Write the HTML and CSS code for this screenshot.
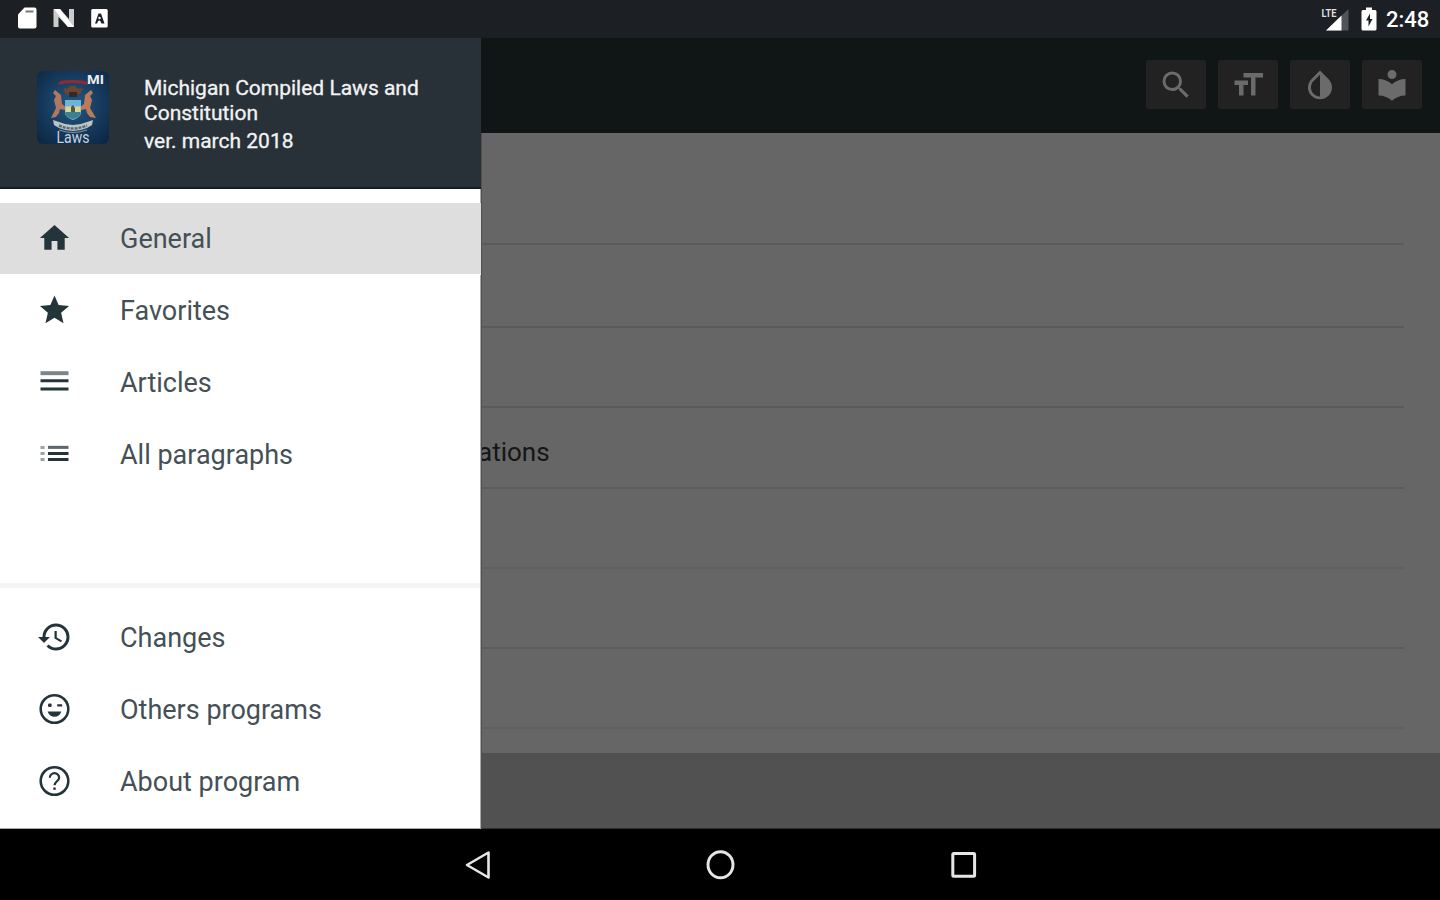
FILE: index.html
```html
<!DOCTYPE html>
<html lang="en">
<head>
<meta charset="utf-8">
<title>Michigan Compiled Laws and Constitution</title>
<link rel="stylesheet" href="styles.css">
</head>
<body>
<div class="screen">
  <header class="status">
    <div class="status-left">
      <svg width="22" height="24" viewBox="0 0 22 24"><path d="M8.500 1.500H18.500Q20.500 1.500 20.500 3.500V20.500Q20.500 22.500 18.500 22.500H4Q2 22.500 2 20.500V8.500Z" fill="#fff"/><path d="M9.500 5.500h8" stroke="#777" stroke-width="2"/></svg>
      <svg width="24" height="24" viewBox="0 0 24 24"><path d="M1.500 3H8L17 13V3h5v18h-6L6.500 11v10h-5z" fill="#ccc"/><path d="M2 3h6l14 18h-6z" fill="#fff"/></svg>
      <svg width="20" height="24" viewBox="0 0 20 24"><rect x="1.200" y="3" width="16.500" height="18.500" rx="1.500" fill="#fff"/><path d="M5 17.500 8.500 7.500h2.500l3.500 10h-3l-1.500-3-2 .5-.8 2.500z" fill="#1c2025"/><circle cx="9.500" cy="12" r="1.200" fill="#fff"/></svg>
    </div>
    <div class="status-right">
      <svg width="30" height="26" viewBox="0 0 30 26"><path d="M28.500 3v21.500H6z" fill="#51555a"/><path d="M21.500 9.500v15H6z" fill="#fff"/><text x="1.500" y="11" class="lte" textLength="15" lengthAdjust="spacingAndGlyphs">LTE</text></svg>
      <svg class="battery" width="16" height="24" viewBox="0 0 16 24"><path d="M5 .5h6v2.500h3q1.500 0 1.500 1.500V22q0 1.500-1.500 1.500H2Q.5 23.500.5 22V4.500Q.5 3 2 3h3z" fill="#fff"/><path d="M9 6.500 5 13.500h2.500v6L11.500 12H9z" fill="#1c2025"/></svg>
      <span class="clock">2:48</span>
    </div>
  </header>

  <main class="body">
    <aside class="drawer">
      <div class="drawer-head">
        <svg class="logo" width="72" height="73" viewBox="0 0 72 73">
          <defs><radialGradient id="sea" cx=".5" cy=".45" r=".75"><stop offset="0" stop-color="#245a82"/><stop offset=".5" stop-color="#173c5f"/><stop offset="1" stop-color="#0b2340"/></radialGradient></defs>
          <rect width="72" height="73" rx="6" fill="url(#sea)"/>
          <path d="M21 14Q35 10 51 14l-2-4Q35 8 23 10z" fill="#8c2b33"/>
          <path d="M27 17q5 2 6-2h5q2 4 8 2l-3 6q-3-1-4 3h-7q0-4-4-3z" fill="#70452f"/>
          <path d="M32 21h8v5h-8z" fill="#33282d"/>
          <path d="M18 19l6 5 1 9 4 3-1 3-5-1-1 4-3 4-5 1 5-10-2-8 2-4-3-3z" fill="#b27760"/>
          <path d="M54 19l-6 5-1 9-4 3 1 3 5-1 1 4 3 4 6 1-6-10 2-8-2-4 3-3z" fill="#bd7a5a"/>
          <path d="M28 29h16v14q-2 4-8 6-6-2-8-6z" fill="#6fb2da"/>
          <path d="M28.500 35.500h15v6h-15z" fill="#d5d995"/><path d="M28.500 41h15v3q-3 3-7.500 4-5-1-7.500-4z" fill="#3c7f91"/><path d="M34 36l2-2 2 3v4h-4z" fill="#4d5940"/>
          <path d="M16 49l6 2q14 6 28 0l6-2-1 5-5 3q-14 6-28 0l-5-3z" fill="#bac3c6"/>
          <path d="M22 54.500q14 6 28 0" fill="none" stroke="#5c6b75" stroke-width="2.500" stroke-dasharray="3 1"/>
          <path d="M22 59q14 5 28 0" fill="none" stroke="#8496a3" stroke-width="1"/>
          <text x="50" y="13" class="logo-state" textLength="17" lengthAdjust="spacingAndGlyphs">MI</text>
          <text x="19.500" y="72" class="logo-word" textLength="33" lengthAdjust="spacingAndGlyphs">Laws</text>
        </svg>
        <div class="titles">
          <div class="app-title">Michigan Compiled Laws and<br>Constitution</div>
          <div class="app-version">ver. march 2018</div>
        </div>
      </div>
      <nav class="menu">
        <a class="item active"><svg class="icon" viewBox="0 0 24 24"><path d="M10 20v-6h4v6h5v-8h3L12 3 2 12h3v8z"/></svg><span>General</span></a>
        <a class="item"><svg class="icon" viewBox="0 0 24 24"><path d="M12 17.270 18.180 21l-1.640-7.030L22 9.240l-7.190-.61L12 2 9.190 8.630 2 9.240l5.460 4.730L5.820 21z"/></svg><span>Favorites</span></a>
        <a class="item"><svg class="icon" viewBox="0 0 24 24"><path opacity=".6" d="M2.400 4.600h19.200v2.700H2.400z"/><path d="M2.400 10.100h19.200v2H2.400zM2.400 15.700h19.200v2.200H2.400z"/></svg><span>Articles</span></a>
        <a class="item"><svg class="icon" viewBox="0 0 24 24"><path opacity=".75" d="M7.500 6.400h14.100v2.100H7.500z"/><path d="M7.500 10.600h14.100v2H7.500zM7.500 14.800h14.100v2H7.500z"/><path opacity=".45" d="M2.400 6.500h2.800v2H2.400zM2.400 10.600h2.800v2H2.400zM2.400 14.800h2.800v2H2.400z"/></svg><span>All paragraphs</span></a>
      </nav>
      <nav class="menu menu-bottom">
        <a class="item"><svg class="icon large" viewBox="0 0 24 24"><path d="M13 3a9 9 0 0 0-9 9H1l3.890 3.890.07.14L9 12H6c0-3.870 3.130-7 7-7s7 3.130 7 7-3.130 7-7 7c-1.930 0-3.680-.79-4.940-2.060l-1.420 1.420A8.954 8.954 0 0 0 13 21a9 9 0 0 0 0-18zm-1 5v5l4.280 2.540.72-1.210-3.500-2.080V8H12z"/></svg><span>Changes</span></a>
        <a class="item"><svg class="icon large" viewBox="0 0 24 24"><circle cx="12" cy="12" r="9.200" fill="none" stroke="#24343b" stroke-width="1.700"/><rect x="7.700" y="8.400" width="2.400" height="2.300" rx=".8"/><path d="M13.800 8.800h3.300v1.500h-3.300zM7.400 13.700h9.200q-1.300 3.500-4.600 3.500t-4.600-3.500z"/></svg><span>Others programs</span></a>
        <a class="item"><svg class="icon large" viewBox="0 0 24 24"><circle cx="12" cy="12" r="9.200" fill="none" stroke="#24343b" stroke-width="1.700"/><path d="M8.900 9.900a3.100 3.100 0 0 1 6.200 0c0 2.100-3.100 2.500-3.100 5" fill="none" stroke="#24343b" stroke-width="1.500"/><path d="M11.200 16.300h1.600v1.600h-1.600z"/></svg><span>About program</span></a>
      </nav>
    </aside>

    <section class="content">
      <div class="toolbar">
        <button class="tool" aria-label="Search"><svg viewBox="0 0 24 24"><path d="M15.500 14h-.79l-.28-.27A6.471 6.471 0 0 0 16 9.500 6.500 6.500 0 1 0 9.500 16c1.610 0 3.090-.59 4.230-1.570l.27.28v.79l5 4.990L20.490 19l-4.990-5zm-6 0C7.010 14 5 11.990 5 9.500S7.010 5 9.500 5 14 7.010 14 9.500 11.990 14 9.500 14z"/></svg></button>
        <button class="tool" aria-label="Text size"><svg viewBox="0 0 24 24"><path d="M9 4v3h5v12h3V7h5V4zM3 12h3v7h3v-7h3V9H3z"/></svg></button>
        <button class="tool" aria-label="Invert colors"><svg viewBox="0 0 24 24"><path d="M17.660 7.930 12 2.270 6.340 7.930c-3.120 3.120-3.120 8.190 0 11.310C7.900 20.800 9.950 21.580 12 21.580s4.100-.78 5.660-2.340c3.120-3.120 3.120-8.190 0-11.310zM12 19.590c-1.600 0-3.110-.62-4.240-1.760C6.620 16.690 6 15.190 6 13.590s.62-3.110 1.760-4.240L12 5.100v14.490z"/></svg></button>
        <button class="tool" aria-label="Library"><svg viewBox="0 0 24 24"><path d="M12 11.550C9.640 9.350 6.480 8 3 8v11c3.480 0 6.640 1.350 9 3.550 2.360-2.190 5.520-3.550 9-3.550V8c-3.480 0-6.640 1.350-9 3.550zM12 8c1.660 0 3-1.340 3-3s-1.340-3-3-3-3 1.340-3 3 1.340 3 3 3z"/></svg></button>
      </div>
      <div class="list">
        <div class="row"></div>
        <div class="row"></div>
        <div class="row"></div>
        <div class="row"><span>ations</span></div>
        <div class="row faint"></div>
        <div class="row"></div>
        <div class="row faint"></div>
      </div>
      <div class="footer"></div>
    </section>
  </main>

  <footer class="navbar">
    <svg width="28" height="32" viewBox="0 0 28 32"><path d="M3 16 24.500 3.500v25z" fill="none" stroke="#e6e6e6" stroke-width="2.600" stroke-linejoin="round"/></svg>
    <svg width="32" height="32" viewBox="0 0 32 32"><ellipse cx="15.500" cy="15.700" rx="12.500" ry="13" fill="none" stroke="#e6e6e6" stroke-width="2.900"/></svg>
    <svg width="28" height="32" viewBox="0 0 28 32"><rect x="2.800" y="4.600" width="21.800" height="22.600" rx="1" fill="none" stroke="#e6e6e6" stroke-width="3"/></svg>
  </footer>
</div>
</body>
</html>
```
FILE: styles.css
```css
* { box-sizing: border-box; }
body { margin: 0; font-family: Roboto, "Liberation Sans", sans-serif; }
.screen { width: 1440px; height: 900px; overflow: hidden; display: flex; flex-direction: column; background: #000; }
svg { display: block; flex: none; }

.status { height: 38px; flex: none; background: #1c2025; display: flex; justify-content: space-between; padding: 6px 12px 0 16px; }
.status-left { display: flex; gap: 14px; }
.status-right { display: flex; }
.lte { font: 700 11px Roboto, sans-serif; fill: #ddd; }
.battery { margin: 1px 9px 0 11px; }
.clock { width: 42px; font-size: 22px; line-height: 27px; font-weight: 500; color: #fff; white-space: nowrap; }

.body { height: 791px; flex: none; display: flex; }

.drawer { width: 481px; flex: none; background: #fff; display: flex; flex-direction: column; border-right: 1px solid #aaa; border-bottom: 1px solid #aaa; }
.drawer-head { height: 151px; flex: none; margin-right: -1px; background: #293138; border-bottom: 2px solid #151b2a; display: flex; padding: 33px 0 0 37px; gap: 35px; }
.titles { color: #f1f3f4; font-size: 21px; padding-top: 5px; white-space: nowrap; -webkit-text-stroke: .3px #f1f3f4; }
.app-title { line-height: 25px; }
.app-version { line-height: 25px; margin-top: 3px; }
.logo-state { font: 700 12px Roboto, sans-serif; fill: #e8edf0; }
.logo-word { font: 400 16px Roboto, sans-serif; fill: #c6d2dc; }

.menu { padding-top: 14px; display: flex; flex-direction: column; margin-right: -1px; }
.item { height: 72px; display: flex; align-items: center; padding: 0 0 2px 36px; gap: 48px; font-size: 27px; color: #455056; white-space: nowrap; }
.item span { padding-top: 2px; }
.item.active { background: linear-gradient(#dedede 71px, #fff 71px); }
.icon { width: 37px; height: 36px; margin-right: -1px; padding: .5px; fill: #24343b; }
.icon.large { padding: 0; }
.menu-bottom { margin-top: auto; margin-right: 0; border-top: 5px solid #f4f4f4; padding-top: 14px; padding-bottom: 10px; }

.content { flex: 1; display: flex; flex-direction: column; background: #666; border-left: 1px solid #505050; border-bottom: 1px solid #303030; }
.toolbar { height: 95px; flex: none; margin-left: -1px; background: #101516; display: flex; justify-content: flex-end; gap: 12px; padding: 22px 18px 0 0; }
.tool { width: 60px; height: 49px; border: 0; padding: 0; border-radius: 3px; background: #222; display: flex; align-items: center; justify-content: center; }
.tool svg { width: 36px; height: 36px; fill: #6b6b6b; }
.list { flex: 1; display: flex; flex-direction: column; padding-right: 36px; }
.row { height: 80px; flex: none; border-bottom: 2px solid #5b5b5b; color: #151515; font-size: 26px; white-space: nowrap; overflow: hidden; }
.row:first-child { height: 112px; }
.row:nth-child(2) { height: 83px; }
.row:nth-child(4) { height: 81px; }
.row.faint { border-color: #606060; }
.row span { display: block; line-height: 80px; margin-top: 4px; margin-left: -4px; }
.footer { height: 75px; flex: none; background: #515151; }

.navbar { height: 71px; display: flex; justify-content: space-between; padding: 20px 462px 0 464px; }
```
